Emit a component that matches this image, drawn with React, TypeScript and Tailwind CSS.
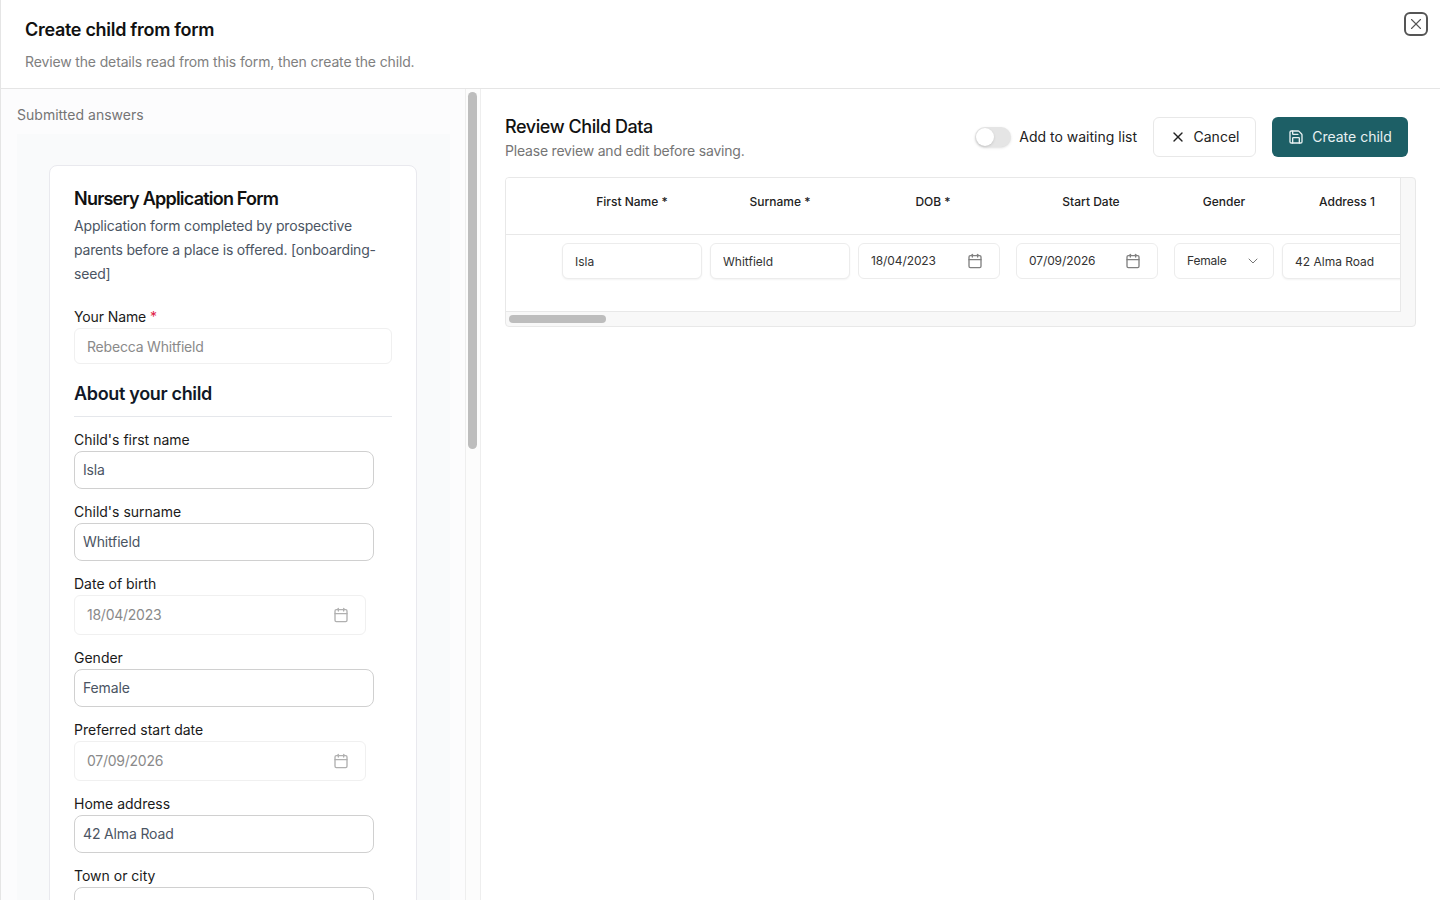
import { Calendar, ChevronDown, Save, X } from 'lucide-react'

function Field(props: { label: string; value: string }) {
  return (
    <div>
      <label className="block h-5 mb-px text-sm leading-5 text-[#1a1a1a]">{props.label}</label>
      <input
        readOnly
        value={props.value}
        className="block w-[300px] h-[38px] px-2 pb-0.5 rounded-lg border border-[#d0d0d0] bg-white text-sm tracking-[-0.15px] text-[#4b5563] outline-none"
      />
    </div>
  )
}

function DateField(props: { label: string; value: string }) {
  return (
    <div>
      <label className="block h-5 mb-px text-sm leading-5 text-[#1a1a1a]">{props.label}</label>
      <div className="flex items-center justify-between w-[292px] h-10 pl-3 pr-4 rounded-md border border-[#f0f0f0] bg-white text-sm tracking-[-0.25px] text-[#8a8a8a]">
        <span>{props.value}</span>
        <Calendar className="w-4 h-4 text-[#b0b0b0]" />
      </div>
    </div>
  )
}

function CellDate(props: { value: string }) {
  return (
    <div className="flex items-center justify-between w-[142px] h-9 shrink-0 mr-2 pl-3 pr-4 rounded-md border border-[#ececec] bg-white text-xs text-[#333] tracking-[-0.1px]">
      <span>{props.value}</span>
      <Calendar className="w-4 h-4 text-[#808080]" />
    </div>
  )
}

function CellInput(props: { value: string }) {
  return (
    <input
      readOnly
      value={props.value}
      className="w-[140px] h-9 shrink-0 px-3 rounded-md border border-[#ececec] bg-white shadow-xs text-xs text-[#333] outline-none"
    />
  )
}

export default function App() {
  return (
    <div className="flex flex-col h-screen overflow-hidden border-l border-[#e5e5e5] bg-white font-['Inter',sans-serif] text-[#111]">
      <header className="relative shrink-0 h-[89px] pl-6 pt-[18px] border-b border-[#e5e5e5]">
        <h1 className="text-lg leading-[23px] font-semibold tracking-[-0.3px] text-[#111]">Create child from form</h1>
        <p className="mt-[11px] text-sm leading-5 tracking-[-0.14px] text-[#808080]">Review the details read from this form, then create the child.</p>
        <button className="absolute right-[12px] top-[12px] flex items-center justify-center w-6 h-6 rounded-md border-2 border-[#555] text-[#555]">
          <X className="w-[18px] h-[18px]" strokeWidth={1.5} />
        </button>
      </header>

      <div className="flex flex-1 min-h-0">
        <aside className="flex flex-col w-[464px] shrink-0 overflow-hidden bg-[#fcfcfd] pl-4 pr-[15px]">
          <p className="h-[45px] shrink-0 pt-4 text-sm leading-5 tracking-[0.02px] text-[#757575]">Submitted answers</p>
          <div className="flex-1 bg-[#f9fafb] pl-8 pr-[33px] pt-[31px]">
            <div className="w-[368px] h-[900px] rounded-lg border border-[#e9e9ee] bg-white px-6 pt-[21px]">
              <h2 className="text-lg leading-6 font-semibold tracking-[-0.78px] text-[#111]">Nursery Application Form</h2>
              <p className="mt-[3px] text-sm leading-6 tracking-[-0.17px] text-[#4b5563]">
                Application form completed by prospective parents before a place is offered. [onboarding-seed]
              </p>
              <div className="mt-[21px]">
                <label className="block h-5 text-sm leading-5 tracking-[-0.12px] text-[#1a1a1a]">
                  Your Name <span className="text-[#e11d48]">*</span>
                </label>
                <div className="flex items-center w-[318px] h-9 mt-px pl-3 pt-0.5 rounded-md border border-[#f0f0f0] bg-white text-sm tracking-[-0.2px] text-[#8a8a8a]">
                  Rebecca Whitfield
                </div>
              </div>
              <h3 className="mt-[18px] h-[34px] w-[318px] box-content border-b border-[#e5e7eb] text-lg leading-6 font-semibold tracking-[-0.33px] text-[#111827]">
                About your child
              </h3>
              <div className="flex flex-col gap-[13px] mt-[13px]">
                <Field label="Child's first name" value="Isla" />
                <Field label="Child's surname" value="Whitfield" />
                <DateField label="Date of birth" value="18/04/2023" />
                <Field label="Gender" value="Female" />
                <DateField label="Preferred start date" value="07/09/2026" />
                <Field label="Home address" value="42 Alma Road" />
                <Field label="Town or city" value="" />
              </div>
            </div>
          </div>
        </aside>

        <div className="w-[16px] shrink-0 border-x border-[#eeeeee] bg-[#fcfcfc] pt-[3px] pl-[2px]">
          <div className="w-[9px] h-[357px] rounded-full bg-[#bdbdbd]" />
        </div>

        <main className="flex-1 min-w-0 pl-6 pr-6 pt-7">
          <div className="flex items-start justify-between h-10 pr-2">
            <div>
              <h2 className="text-lg leading-5 font-medium tracking-[-0.43px] text-[#111]">Review Child Data</h2>
              <p className="mt-1 text-sm leading-5 tracking-[-0.2px] text-[#757575]">Please review and edit before saving.</p>
            </div>
            <div className="flex items-center h-10">
              <div className="flex items-center w-9 h-5 rounded-full bg-[#e5e5e5] shadow-sm">
                <div className="w-[18px] h-[18px] ml-px rounded-full bg-white shadow-sm" />
              </div>
              <span className="ml-2 text-sm text-[#222]">Add to waiting list</span>
              <button className="flex items-center justify-center gap-2 w-[103px] h-10 ml-4 rounded-md border border-[#e8e8e8] bg-white text-sm text-[#222]">
                <X className="w-4 h-4" />
                Cancel
              </button>
              <button className="flex items-center justify-center gap-2 w-[136px] h-10 ml-4 rounded-md bg-[#1d5f66] text-sm text-[#e8f1f2]">
                <Save className="w-4 h-4" />
                Create child
              </button>
            </div>
          </div>

          <div className="flex w-[911px] h-[150px] mt-5 overflow-hidden rounded border border-[#e8e8e8] bg-[#f8f8f8]">
            <div className="flex flex-col w-[895px] shrink-0">
              <div className="h-[134px] overflow-hidden border-r border-b border-[#e8e8e8] bg-white">
                <div className="flex h-[57px] items-center pb-2 border-b border-[#e8e8e8] pl-14 text-xs font-medium text-[#222]">
                  <div className="w-[148px] shrink-0 pr-2 text-center">First Name *</div>
                  <div className="w-[148px] shrink-0 pr-2 text-center">Surname *</div>
                  <div className="w-[150px] shrink-0 text-center">DOB *</div>
                  <div className="w-[166px] shrink-0 text-center">Start Date</div>
                  <div className="w-[108px] shrink-0 pr-2 text-center">Gender</div>
                  <div className="w-[130px] shrink-0 text-center">Address 1</div>
                </div>
                <div className="flex items-center gap-2 pt-2 pl-14 text-xs">
                  <CellInput value="Isla" />
                  <CellInput value="Whitfield" />
                  <CellDate value="18/04/2023" />
                  <CellDate value="07/09/2026" />
                  <div className="flex items-center justify-between w-[100px] h-9 shrink-0 pl-3 pr-3 rounded-md border border-[#ececec] bg-white text-xs tracking-[-0.2px] text-[#333]">
                    <span>Female</span>
                    <ChevronDown className="w-4 h-4 text-[#777]" strokeWidth={1.5} />
                  </div>
                  <CellInput value="42 Alma Road" />
                </div>
              </div>
              <div className="flex-1 pl-[3px] pt-[3px]">
                <div className="w-[97px] h-2 rounded-full bg-[#bdbdbd]" />
              </div>
            </div>
          </div>
        </main>
      </div>
    </div>
  )
}
